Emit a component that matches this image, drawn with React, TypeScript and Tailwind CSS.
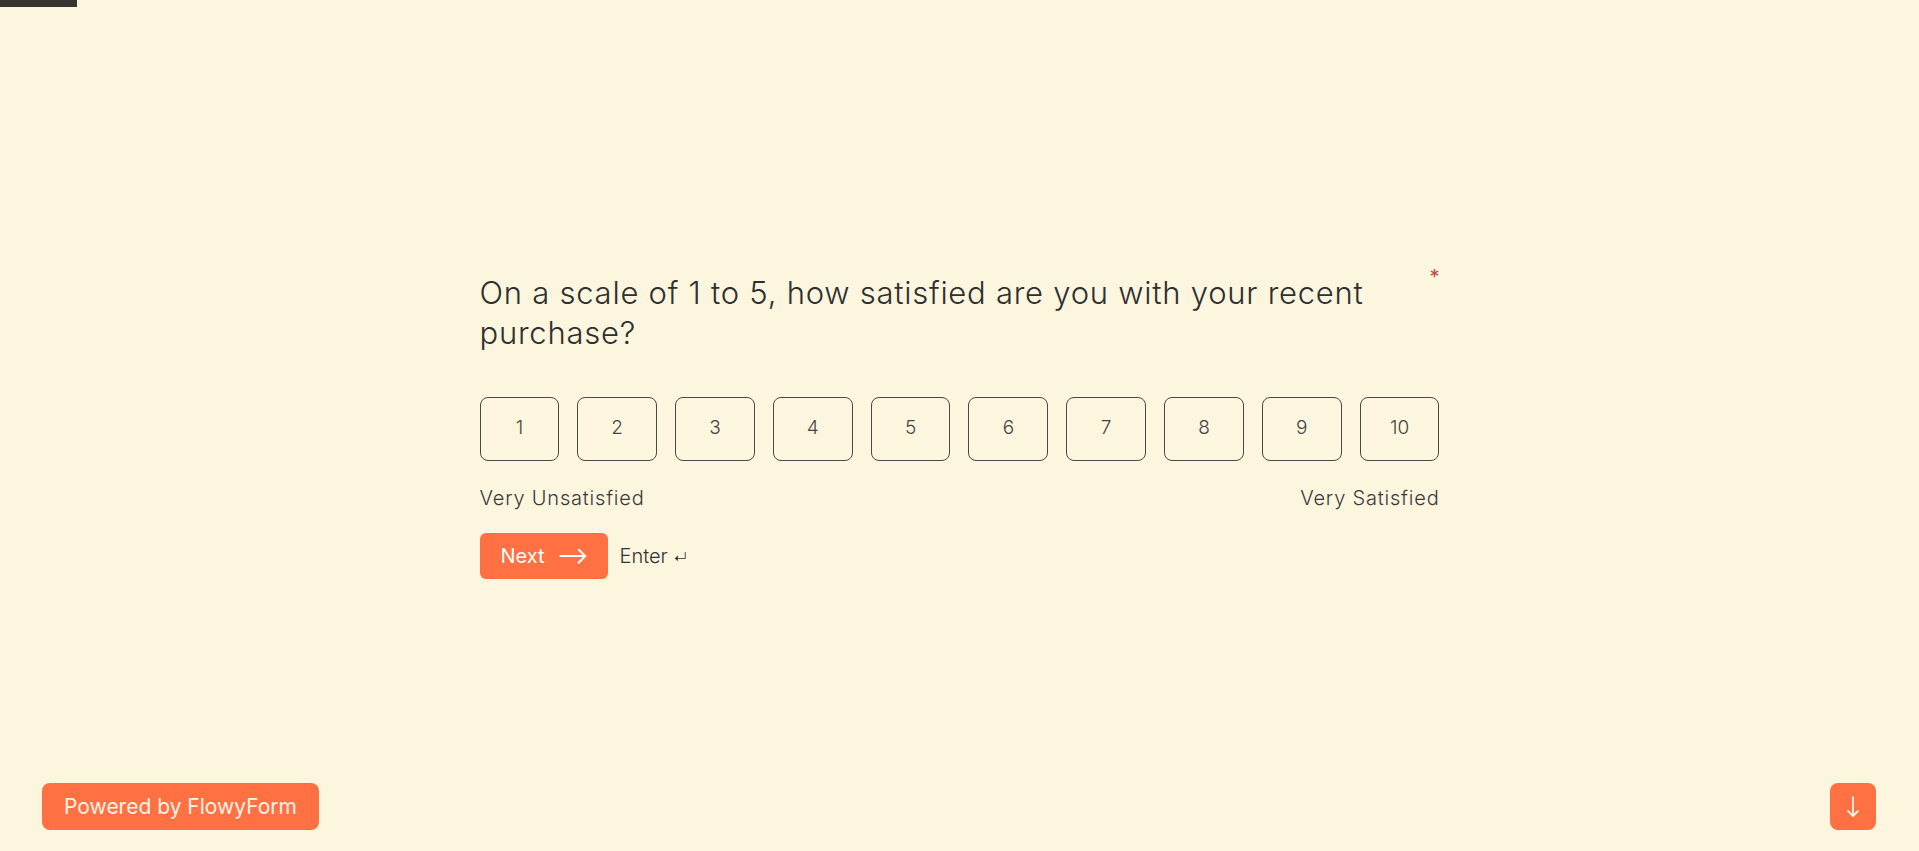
const scale = [1, 2, 3, 4, 5, 6, 7, 8, 9, 10];

export default function App() {
  return (
    <div className="relative min-h-screen w-full bg-[#fdf6df] text-[#333333] font-['Inter','Open_Sans',sans-serif]">
      {/* progress bar */}
      <div className="absolute left-0 top-0 h-[7px] w-[77px] bg-[#363532]" />

      <main className="flex min-h-screen items-center justify-center">
        <div className="w-[960px]">
          <div className="flex items-start justify-between">
            <h1 className="max-w-[900px] text-[31px] font-light leading-[40px] tracking-[0.75px] text-[#2f2f2f]">
              On a scale of 1 to 5, how satisfied are you with your recent purchase?
            </h1>
            <span className="-mt-[6px] text-[20px] leading-none text-[#c0483e]">*</span>
          </div>

          <div className="mt-[44px] flex gap-[18px]">
            {scale.map((n) => (
              <button
                key={n}
                className="flex h-[64px] flex-1 items-center justify-center rounded-[8px] border border-[#4a4744] text-[19px] font-light text-[#444]"
              >
                {n}
              </button>
            ))}
          </div>

          <div className="mt-[22px] flex justify-between text-[20px] font-light tracking-[0.8px] text-[#3a3a3a]">
            <span>Very Unsatisfied</span>
            <span>Very Satisfied</span>
          </div>

          <div className="mt-[20px] flex items-center gap-[12px]">
            <button className="flex h-[46px] w-[128px] items-center gap-[12px] rounded-[6px] bg-[#ff7142] pl-[21px] text-[20px] font-normal text-white">
              <span>Next</span>
              <span className="text-[24px] leading-none">⟶</span>
            </button>
            <span className="text-[20px] font-light text-[#333]">
              Enter <span className="text-[14px]">↵</span>
            </span>
          </div>
        </div>
      </main>

      {/* footer badges */}
      <div className="fixed bottom-[21px] left-[42px] flex h-[47px] w-[277px] items-center justify-center rounded-[8px] bg-[#ff7142] text-[21px] text-[#fff3e8]">
        Powered by FlowyForm
      </div>
      <button className="fixed bottom-[21px] right-[43px] flex h-[47px] w-[46px] items-center justify-center rounded-[8px] bg-[#ff7142] text-[#fff3e8]">
        <svg width="14" height="24" viewBox="0 0 14 24" fill="none" stroke="currentColor" strokeWidth="1.8" strokeLinecap="round" strokeLinejoin="round">
          <path d="M7 2v19" />
          <path d="M2 16l5 5 5-5" />
        </svg>
      </button>
    </div>
  );
}
